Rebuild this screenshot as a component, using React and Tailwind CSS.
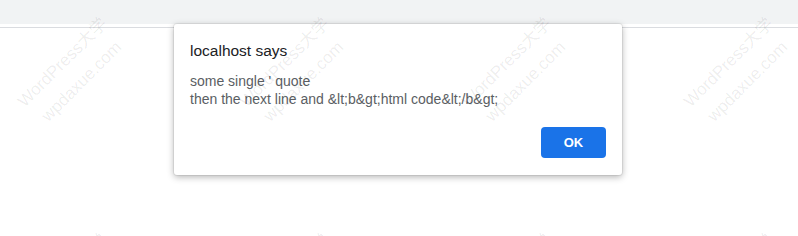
const marks = [
  { x: 72, y: 72 },
  { x: 294, y: 72 },
  { x: 516, y: 72 },
  { x: 738, y: 72 },
  { x: 72, y: 288 },
  { x: 294, y: 288 },
  { x: 516, y: 288 },
  { x: 738, y: 288 },
];

function Watermark({ x, y }) {
  return (
    <div
      className="absolute -translate-x-1/2 -translate-y-1/2 -rotate-45 whitespace-nowrap text-center text-[17px] leading-[27px] text-black/[0.08] font-['Liberation_Sans','Noto_Sans_CJK_SC',sans-serif] pointer-events-none"
      style={{ left: x, top: y }}
    >
      <div>WordPress大学</div>
      <div>wpdaxue.com</div>
    </div>
  );
}

export default function App() {
  return (
    <div className="relative w-[798px] h-[236px] bg-white overflow-hidden font-['Liberation_Sans',Arial,sans-serif]">
      {/* browser chrome strip */}
      <div className="h-[24px] bg-[#f1f3f4]" />
      <div className="mt-[3px] border-t border-[#dadce0]" />

      {/* alert dialog */}
      <div className="absolute left-[174px] top-[24px] w-[448px] rounded-[3px] bg-white shadow-[0_2px_7px_rgba(0,0,0,0.3),0_0_0_1px_rgba(0,0,0,0.06)] px-4 pt-[18px] pb-[17px]">
        <div className="text-[15.5px] leading-[18px] text-[#202124]">localhost says</div>
        <div className="mt-[12px] text-[14px] leading-[18px] text-[#5a5e63]">
          <div>some single ' quote</div>
          <div>then the next line and &amp;lt;b&amp;gt;html code&amp;lt;/b&amp;gt;</div>
        </div>
        <div className="mt-[19px] flex justify-end">
          <button className="w-[65px] h-[31px] rounded-[4px] bg-[#1a73e8] text-white text-[13px] font-bold">
            OK
          </button>
        </div>
      </div>

      {marks.map((m, i) => (
        <Watermark key={i} x={m.x} y={m.y} />
      ))}
    </div>
  );
}
